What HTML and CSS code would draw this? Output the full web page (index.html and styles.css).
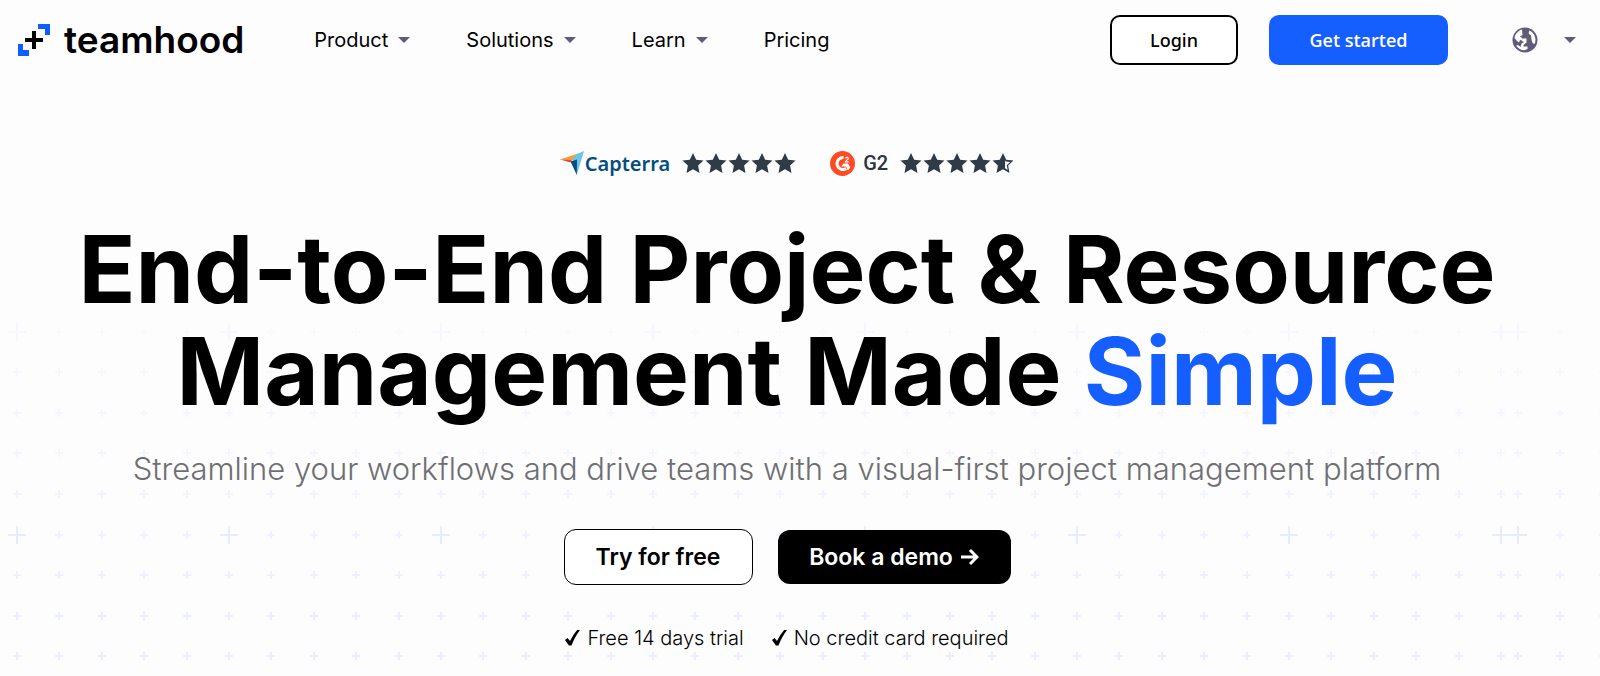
FILE: index.html
```html
<!DOCTYPE html>
<html lang="en">
<head>
    <meta charset="UTF-8">
    <meta name="viewport" content="width=device-width, initial-scale=1.0">
    <title>Teamhood</title>
    <link rel="stylesheet" href="styles.css">
</head>
<body>
    <!-- plus sign grid behind the hero -->
    <svg class="grid-bg" width="100%" height="100%" aria-hidden="true">
        <defs>
            <pattern id="plus" x="8" y="323" width="212" height="203" patternUnits="userSpaceOnUse">
                <path class="plus-big" d="M0 9h18M9 0v18"/>
                <path class="plus-small" d="M47 9h8M51 5v8M90 9h8M94 5v8M132 9h8M136 5v8M175 9h8M179 5v8"/>
                <path class="plus-small" d="M5 49h8M9 45v8M47 49h8M51 45v8M90 49h8M94 45v8M132 49h8M136 45v8M175 49h8M179 45v8"/>
                <path class="plus-small" d="M5 90h8M9 86v8M47 90h8M51 86v8M90 90h8M94 86v8M132 90h8M136 86v8M175 90h8M179 86v8"/>
                <path class="plus-small" d="M5 130h8M9 126v8M47 130h8M51 126v8M90 130h8M94 126v8M132 130h8M136 126v8M175 130h8M179 126v8"/>
                <path class="plus-small" d="M5 171h8M9 167v8M47 171h8M51 167v8M90 171h8M94 167v8M132 171h8M136 167v8M175 171h8M179 167v8"/>
            </pattern>
            <pattern id="plus-next" href="#plus" x="1509"/>
            <linearGradient id="fade" gradientUnits="userSpaceOnUse" x1="0" y1="310" x2="0" y2="620">
                <stop offset="0" stop-color="#fff" stop-opacity=".15"/>
                <stop offset="1" stop-color="#fff"/>
            </linearGradient>
            <mask id="fade-mask" maskUnits="userSpaceOnUse" x="0" y="310" width="100%" height="100%">
                <rect y="310" width="100%" height="100%" fill="url(#fade)"/>
            </mask>
        </defs>
        <g mask="url(#fade-mask)">
            <rect width="1509" height="100%" fill="url(#plus)"/>
            <rect x="1509" width="100%" height="100%" fill="url(#plus-next)"/>
        </g>
    </svg>

    <!-- shapes used more than once -->
    <svg class="sprite" width="0" height="0" aria-hidden="true">
        <symbol id="star" viewBox="0 0 22 20">
            <path d="M11 0l3.2 6.7 7.3.9-5.4 5 1.4 7.3-6.5-3.6-6.5 3.6 1.4-7.3-5.4-5 7.3-.9z"/>
        </symbol>
        <symbol id="star-half" viewBox="0 0 22 20">
            <path d="M11 0l3.2 6.7 7.3.9-5.4 5 1.4 7.3-6.5-3.6-6.5 3.6 1.4-7.3-5.4-5 7.3-.9zM13 7.5v7.8l2.7 1.6-.9-4.7 3.4-3.2-4.4-.6z" fill-rule="evenodd"/>
        </symbol>
        <symbol id="caret" viewBox="0 0 12 6">
            <path d="M0 0h12L6 6z"/>
        </symbol>
        <symbol id="check" viewBox="0 0 15 16">
            <path d="M0 10l2.6-1.9 2.4 3C7.2 6.8 9.4 3 12.2 0H15C11.6 4.6 8.8 9.6 6.5 15.500H3.9z"/>
        </symbol>
    </svg>

    <header class="header">
        <a class="logo" href="#">
            <svg width="32" height="32" viewBox="0 0 32 32" aria-hidden="true">
                <path fill="#0a5fff" d="M20 0h12v11h-5V5h-7zM0 20h5v6h6v6H0z"/>
                <path d="M14 7h4v7h7v4h-7v7h-4v-7H7v-4h7z"/>
            </svg>
            <span>teamhood</span>
        </a>
        <nav class="nav">
            <a href="#">Product <svg class="caret"><use href="#caret"/></svg></a>
            <a href="#">Solutions <svg class="caret"><use href="#caret"/></svg></a>
            <a href="#">Learn <svg class="caret"><use href="#caret"/></svg></a>
            <a href="#">Pricing</a>
        </nav>
        <div class="actions">
            <button type="button" class="btn login">Login</button>
            <button type="button" class="btn start">Get started</button>
            <button type="button" class="language" aria-label="Language">
                <svg width="26" height="26" viewBox="0 0 26 26" aria-hidden="true">
                    <circle cx="13" cy="13" r="12.500"/>
                    <path fill="#fff" d="M10 2.600C6 3.800 3.200 7 2.500 11l2.500 3 2 1.500 1-2.500 2 .5V11L8 9.500l2.500-1.500z"/>
                    <path fill="#fff" d="M10 11.500h4.500v4L11.500 18v1.500h4V22l-3 1.300c-3.500 0-6.500-1.800-8.300-4.500L6 18l2.500 2 1-3.500 2.500-1.500-2-1z"/>
                    <path fill="#fff" d="M17.500 3.500c3.500 1.700 6 5.200 6 9.500 0 1.500-.4 2.800-.8 4l-2.200-1-1-3.500-.5-4-2.500-2z"/>
                </svg>
                <svg class="caret"><use href="#caret"/></svg>
            </button>
        </div>
    </header>

    <main class="hero">
        <div class="ratings">
            <div class="rating">
                <svg width="24" height="24" viewBox="0 0 24 24" aria-hidden="true">
                    <path fill="#ff9d28" d="M0 8.500L18 2.500 15 9.500z"/>
                    <path fill="#e54747" d="M0 8.500l12 .4-1.500 2.600z"/>
                    <path fill="#68c5ed" d="M24 0L16.800 24 15.500 9.500 11.500 9 17 3z"/>
                    <path fill="#044d80" d="M10.500 10.500L17 8.500l-.2 15.500z"/>
                </svg>
                <span class="capterra">Capterra</span>
                <div class="stars" role="img" aria-label="5 out of 5">
                    <svg><use href="#star"/></svg><svg><use href="#star"/></svg><svg><use href="#star"/></svg><svg><use href="#star"/></svg><svg><use href="#star"/></svg>
                </div>
            </div>
            <div class="rating">
                <svg width="25" height="25" viewBox="0 0 25 25" aria-hidden="true">
                    <circle cx="12.500" cy="12.500" r="12.500" fill="#ff4b23"/>
                    <path fill="none" stroke="#fff" stroke-width="3" d="M13.500 6.500a6 6 0 1 0 2.800 11"/>
                    <path fill="#fff" d="M13.500 12.500h4.500l2.200 3.800-2.200 3.200-2.200-4h-4.500z"/>
                    <path fill="none" stroke="#fff" stroke-width="1.200" d="M15.500 7.200c.6-1.400 3-1.200 2.800.4-.1 1-2.600 1.700-2.800 3.300h3.200"/>
                </svg>
                <span class="g2">G2</span>
                <div class="stars" role="img" aria-label="4.5 out of 5">
                    <svg><use href="#star"/></svg><svg><use href="#star"/></svg><svg><use href="#star"/></svg><svg><use href="#star"/></svg><svg><use href="#star-half"/></svg>
                </div>
            </div>
        </div>

        <h1>End-to-End Project &amp; Resource<br>Management Made <span>Simple</span></h1>
        <p class="tagline">Streamline your workflows and drive teams with a visual-first project management platform</p>

        <div class="cta">
            <button type="button" class="btn try">Try for free</button>
            <button type="button" class="btn demo">Book a demo
                <svg width="18" height="18" viewBox="0 0 18 18" aria-hidden="true"><path d="M0 9h16M9 2l7 7-7 7"/></svg>
            </button>
        </div>

        <ul class="perks">
            <li><svg class="check"><use href="#check"/></svg>Free 14 days trial</li>
            <li><svg class="check"><use href="#check"/></svg>No credit card required</li>
        </ul>
    </main>
</body>
</html>
```
FILE: styles.css
```css
* {
    box-sizing: border-box;
}

body {
    margin: 0;
    position: relative;
    min-height: 100vh;
    background-color: #fdfdfe;
    color: #000;
    font-family: Inter, "Liberation Sans", sans-serif;
}

a {
    color: inherit;
    text-decoration: none;
}

svg {
    flex-shrink: 0;
}

.sprite {
    position: absolute;
}

/* Background */
.grid-bg {
    position: absolute;
    top: 0;
    left: 0;
    z-index: -1;
}
.plus-big,
.plus-small {
    fill: none;
    stroke: #dfe5ff;
    stroke-width: 2;
}
.plus-small {
    stroke: #ebeeff;
}

/* Header */
.header {
    display: flex;
    align-items: center;
    height: 80px;
    padding: 0 24px 0 18px;
}
.logo {
    display: flex;
    align-items: center;
    gap: 14px;
    font-size: 37px;
    font-weight: 600;
    line-height: 40px;
}
.nav {
    display: flex;
    gap: 56px;
    margin-left: 70px;
    font-size: 20px;
    line-height: 24px;
}
.nav a {
    display: flex;
    align-items: center;
    gap: 10px;
}
.caret {
    width: 12px;
    height: 6px;
    fill: #5f5b78;
}
.actions {
    display: flex;
    align-items: center;
    margin-left: auto;
}
.btn {
    display: flex;
    align-items: center;
    justify-content: center;
    border: none;
    font-family: inherit;
    cursor: pointer;
}
.login,
.start {
    height: 50px;
    border-radius: 10px;
    font-family: "Noto Sans", sans-serif;
    font-size: 18px;
    font-weight: 500;
}
.login {
    width: 128px;
    border: 2px solid #000;
    background-color: #fff;
    color: #000;
}
.start {
    width: 179px;
    margin-left: 31px;
    background-color: #155eff;
    color: #fff;
    font-family: "Open Sans", sans-serif;
    font-weight: 600;
}
.language {
    display: flex;
    align-items: center;
    gap: 26px;
    margin-left: 64px;
    padding: 0;
    border: none;
    background: none;
    fill: #5f5b78;
    cursor: pointer;
}

/* Hero */
.hero {
    display: flex;
    flex-direction: column;
    align-items: center;
    padding: 71px 26px 24px 0;
    text-align: center;
}
.ratings {
    display: flex;
    gap: 34px;
}
.rating {
    display: flex;
    align-items: center;
    height: 24px;
}
.capterra {
    margin-left: 1px;
    color: #044d80;
    font-family: "Noto Sans", sans-serif;
    font-size: 20px;
    font-weight: 600;
}
.g2 {
    margin-left: 8px;
    color: #2b3440;
    font-family: Roboto, sans-serif;
    font-size: 20px;
    font-weight: 500;
}
.stars {
    display: flex;
    gap: 1px;
    margin-left: 12px;
    fill: #303b48;
}
.stars svg {
    width: 22px;
    height: 20px;
}
h1 {
    margin: 43px 0 0;
    font-size: 94px;
    font-weight: 700;
    line-height: 102px;
}
h1 span {
    color: #155eff;
}
.tagline {
    margin: 27px 0 0;
    color: #6f6f73;
    font-size: 31px;
    font-weight: 300;
    line-height: 40px;
}
.cta {
    display: flex;
    align-items: center;
    gap: 25px;
    margin-top: 40px;
}
.try,
.demo {
    height: 56px;
    border-radius: 12px;
    font-size: 23px;
    font-weight: 600;
}
.try {
    width: 189px;
    border: 1px solid #000;
    background-color: #fff;
    color: #000;
}
.demo {
    gap: 8px;
    width: 233px;
    height: 54px;
    background-color: #000;
    color: #fff;
}
.demo svg {
    fill: none;
    stroke: #fff;
    stroke-width: 3;
}
.perks {
    display: flex;
    gap: 28px;
    margin: 41px 0 0;
    padding: 0;
    font-size: 20px;
    font-weight: 300;
    line-height: 24px;
    list-style: none;
}
.perks li {
    display: flex;
    align-items: center;
    gap: 7px;
}
.check {
    width: 15px;
    height: 16px;
}
```
